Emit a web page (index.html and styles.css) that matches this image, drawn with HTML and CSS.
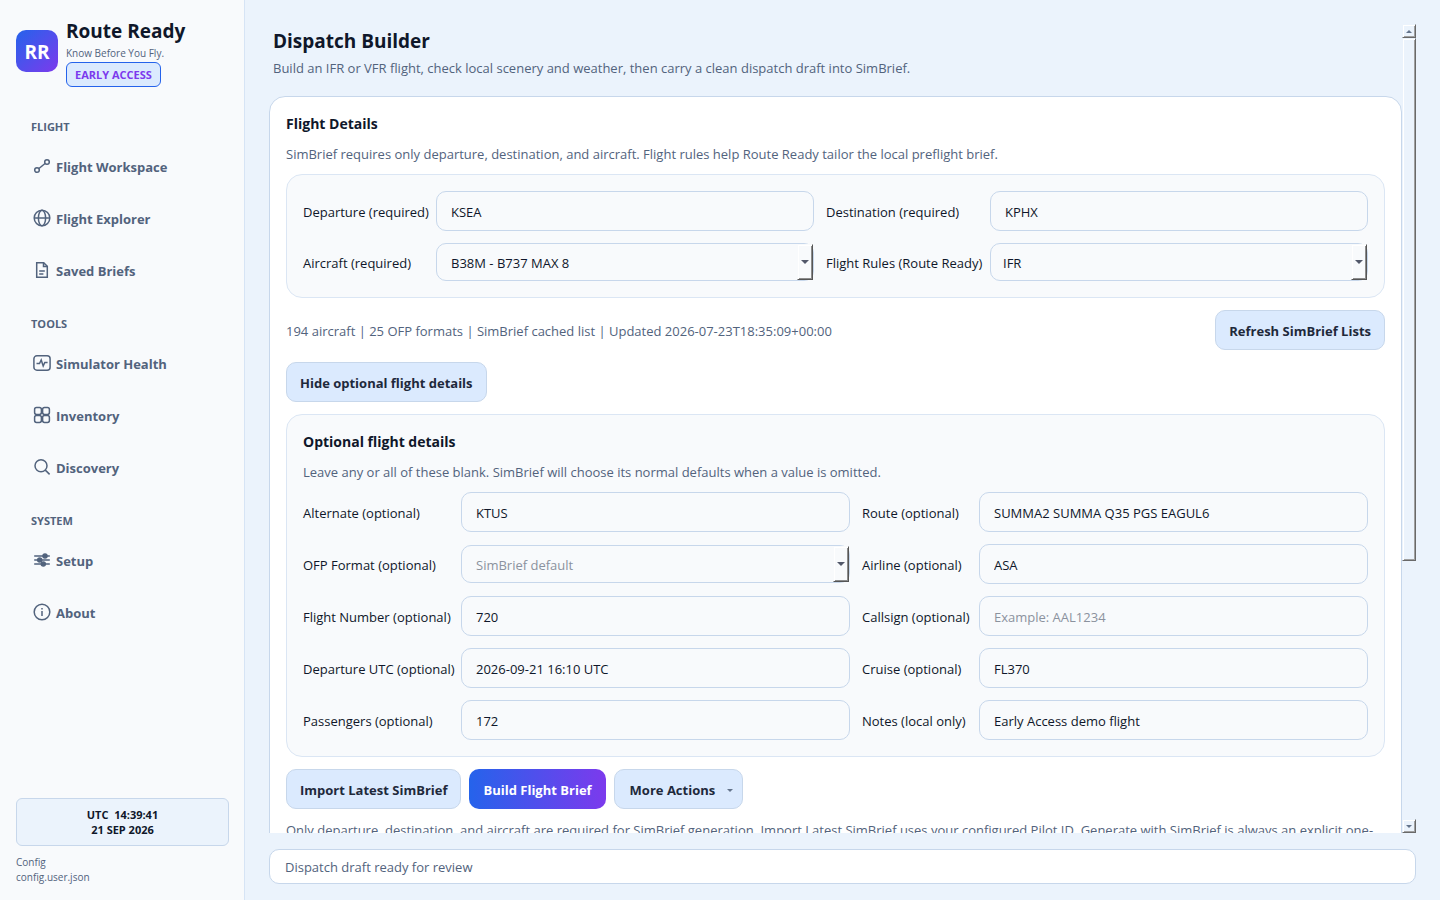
FILE: index.html
```html
<!DOCTYPE html>
<html lang="en">
<head>
  <meta charset="UTF-8" />
  <meta name="viewport" content="width=device-width, initial-scale=1.0"/>
  <title>Route Ready - Dispatch Builder</title>
  <link rel="stylesheet" href="styles.css">
</head>
<body>
  <aside class="sidebar">
    <div class="brand">
      <div class="brand-logo">RR</div>
      <div class="brand-text">
        <div class="brand-name">Route Ready</div>
        <div class="brand-tag">Know Before You Fly.</div>
        <span class="badge">EARLY ACCESS</span>
      </div>
    </div>

    <nav class="nav">
      <h2 class="nav-title">FLIGHT</h2>
      <a class="nav-item" href="#workspace">
        <svg viewBox="0 0 18 18"><circle cx="4" cy="13" r="2.3"/><circle cx="14" cy="5" r="2.3"/><path d="M5.9 11.5l6.2-5"/></svg>
        Flight Workspace
      </a>
      <a class="nav-item" href="#explorer">
        <svg viewBox="0 0 18 18"><circle cx="9" cy="9" r="7.8"/><ellipse cx="9" cy="9" rx="3.6" ry="7.8"/><path d="M1.2 9h15.6"/></svg>
        Flight Explorer
      </a>
      <a class="nav-item" href="#briefs">
        <svg viewBox="0 0 18 18"><path d="M3.7 1.7h7l3.6 3.6v11H3.7z"/><path d="M10.5 1.7v3.8h3.8M6.2 10h5.6M6.2 13h4.2"/></svg>
        Saved Briefs
      </a>

      <h2 class="nav-title">TOOLS</h2>
      <a class="nav-item" href="#health">
        <svg viewBox="0 0 18 18"><rect x="0.9" y="1.8" width="16.2" height="14.4" rx="3"/><path d="M3.5 9.5h3L8.2 6l2 6 1.6-3.5h2.8"/></svg>
        Simulator Health
      </a>
      <a class="nav-item" href="#inventory">
        <svg viewBox="0 0 18 18"><rect x="1.6" y="1.6" width="6.8" height="6.8" rx="1.9"/><rect x="9.6" y="1.6" width="6.8" height="6.8" rx="1.9"/><rect x="1.6" y="9.6" width="6.8" height="6.8" rx="1.9"/><rect x="9.6" y="9.6" width="6.8" height="6.8" rx="1.9"/></svg>
        Inventory
      </a>
      <a class="nav-item" href="#discovery">
        <svg viewBox="0 0 18 18"><circle cx="8" cy="7.8" r="6"/><path d="M12.3 12.1l4.3 4.3"/></svg>
        Discovery
      </a>

      <h2 class="nav-title">SYSTEM</h2>
      <a class="nav-item" href="#setup">
        <svg viewBox="0 0 18 18"><path d="M1.2 5h15.6M1.2 9h15.6M1.2 13h15.6"/><circle class="knob" cx="12" cy="5" r="2"/><circle class="knob" cx="6.7" cy="9" r="2"/><circle class="knob" cx="10.3" cy="13" r="2"/></svg>
        Setup
      </a>
      <a class="nav-item" href="#about">
        <svg viewBox="0 0 18 18"><circle cx="9" cy="9" r="7.8"/><path d="M9 8v5M9 5v1.4"/></svg>
        About
      </a>
    </nav>

    <div class="clock">UTC&nbsp; 14:39:41<br>21 SEP 2026</div>
    <div class="config">Config<br>config.user.json</div>
  </aside>

  <main class="main">
    <div class="scroll-area">
      <div class="content">
        <header class="page-header">
          <h1>Dispatch Builder</h1>
          <p class="subtitle">Build an IFR or VFR flight, check local scenery and weather, then carry a clean dispatch draft into SimBrief.</p>
        </header>

        <form class="card">
          <h2 class="card-title">Flight Details</h2>
          <p class="muted">SimBrief requires only departure, destination, and aircraft. Flight rules help Route Ready tailor the local preflight brief.</p>

          <div class="panel fields">
            <label for="departure">Departure (required)</label>
            <input type="text" id="departure" value="KSEA">
            <label for="destination">Destination (required)</label>
            <input type="text" id="destination" value="KPHX">
            <label for="aircraft">Aircraft (required)</label>
            <div class="combo">
              <select id="aircraft"><option>B38M - B737 MAX 8</option></select>
              <span class="combo-arrow"></span>
            </div>
            <label for="rules">Flight Rules (Route Ready)</label>
            <div class="combo">
              <select id="rules" class="plain"><option>IFR</option><option>VFR</option></select>
              <span class="combo-arrow"></span>
            </div>
          </div>

          <div class="list-row">
            <span class="muted">194 aircraft | 25 OFP formats | SimBrief cached list | Updated 2026-07-23T18:35:09+00:00</span>
            <button type="button" class="btn">Refresh SimBrief Lists</button>
          </div>

          <button type="button" class="btn toggle">Hide optional flight details</button>

          <section class="panel">
            <h2 class="card-title">Optional flight details</h2>
            <p class="muted">Leave any or all of these blank. SimBrief will choose its normal defaults when a value is omitted.</p>
            <div class="fields optional">
              <label for="alternate">Alternate (optional)</label>
              <input type="text" id="alternate" value="KTUS">
              <label for="route">Route (optional)</label>
              <input type="text" id="route" value="SUMMA2 SUMMA Q35 PGS EAGUL6">
              <label for="ofp">OFP Format (optional)</label>
              <div class="combo">
                <select id="ofp" class="empty"><option>SimBrief default</option></select>
                <span class="combo-arrow"></span>
              </div>
              <label for="airline">Airline (optional)</label>
              <input type="text" id="airline" value="ASA">
              <label for="number">Flight Number (optional)</label>
              <input type="text" id="number" value="720">
              <label for="callsign">Callsign (optional)</label>
              <input type="text" id="callsign" placeholder="Example: AAL1234">
              <label for="utc">Departure UTC (optional)</label>
              <input type="text" id="utc" value="2026-09-21 16:10 UTC">
              <label for="cruise">Cruise (optional)</label>
              <input type="text" id="cruise" value="FL370">
              <label for="pax">Passengers (optional)</label>
              <input type="text" id="pax" value="172">
              <label for="notes">Notes (local only)</label>
              <input type="text" id="notes" value="Early Access demo flight">
            </div>
          </section>

          <div class="actions">
            <button type="button" class="btn">Import Latest SimBrief</button>
            <button type="button" class="btn primary">Build Flight Brief</button>
            <button type="button" class="btn more">More Actions <span class="caret"></span></button>
          </div>

          <p class="note">Only departure, destination, and aircraft are required for SimBrief generation. Import Latest SimBrief uses your configured Pilot ID. Generate with SimBrief is always an explicit one-flight</p>
        </form>
      </div>

      <div class="scrollbar">
        <button type="button" class="scroll-btn" aria-label="Scroll up"><span class="caret up"></span></button>
        <div class="scroll-track"><div class="scroll-thumb"></div></div>
        <button type="button" class="scroll-btn" aria-label="Scroll down"><span class="caret"></span></button>
      </div>
    </div>

    <div class="status">Dispatch draft ready for review</div>
  </main>
</body>
</html>
```
FILE: styles.css
```css
* {
  box-sizing: border-box;
}
body {
  display: flex;
  height: 100vh;
  margin: 0;
  font-family: "Open Sans", "Noto Sans", sans-serif;
  font-size: 13px;
  line-height: 18px;
  color: #0f172a;
  background-color: #ebf3fc;
}
h1, h2, p {
  margin: 0;
}
input, select, button {
  font: inherit;
  color: inherit;
}

/* sidebar */
.sidebar {
  display: flex;
  flex-direction: column;
  width: 245px;
  flex-shrink: 0;
  padding: 16px 15px 15px 16px;
  background-color: #f8fafc;
  border-right: 1px solid #d6e4f5;
}
.brand {
  display: flex;
  align-items: flex-start;
  gap: 8px;
}
.brand-logo {
  width: 42px;
  height: 42px;
  margin-top: 14px;
  border-radius: 10px;
  background: linear-gradient(135deg, #2563eb, #7c3aed);
  color: #fff;
  font-size: 19px;
  font-weight: bold;
  line-height: 44px;
  text-align: center;
}
.brand-name {
  font-size: 19px;
  font-weight: bold;
  line-height: 30px;
}
.brand-tag {
  color: #52637d;
  font-size: 10px;
  line-height: 15px;
}
.badge {
  display: inline-block;
  margin-top: 1px;
  padding: 4px 8px;
  border: 1px solid #2563eb;
  border-radius: 6px;
  background-color: #dbeafe;
  color: #7c3aed;
  font-size: 11px;
  font-weight: bold;
  line-height: 15px;
}
.nav {
  display: flex;
  flex-direction: column;
  gap: 8px;
  margin-top: 17px;
}
.nav-title {
  padding: 15px 15px 3px;
  color: #52637d;
  font-size: 11px;
  line-height: 15px;
}
.nav-item {
  display: flex;
  align-items: center;
  gap: 5px;
  height: 44px;
  padding: 0 17px;
  color: #52637d;
  font-weight: bold;
  text-decoration: none;
}
.nav-item svg {
  width: 18px;
  height: 18px;
  margin-bottom: 2px;
  fill: none;
  stroke: #52637d;
  stroke-width: 1.5;
}
.nav-item .knob {
  fill: #52637d;
}
.clock {
  margin-top: auto;
  padding: 8px;
  border: 1px solid #c7d7eb;
  border-radius: 6px;
  background-color: #ebf3fc;
  font-size: 11px;
  font-weight: bold;
  line-height: 15px;
  text-align: center;
}
.config {
  margin-top: 9px;
  color: #52637d;
  font-size: 10px;
  line-height: 15px;
}

/* main column */
.main {
  display: flex;
  flex-direction: column;
  flex: 1;
  gap: 16px;
  min-width: 0;
  padding: 24px 24px 16px;
}
.scroll-area {
  display: flex;
  flex: 1;
  min-height: 0;
}
.content {
  flex: 1;
  min-width: 0;
  overflow: hidden;
}
.page-header {
  padding: 2px 4px 19px;
}
h1 {
  margin-bottom: 3px;
  font-size: 19px;
  line-height: 30px;
}
.subtitle, .muted, .note {
  color: #52637d;
}
.card {
  display: flex;
  flex-direction: column;
  gap: 12px;
  padding: 16px;
  border: 1px solid #c7d7eb;
  border-radius: 16px;
  background-color: #fff;
}
.card-title {
  padding-top: 2px;
  font-size: 14px;
  line-height: 17px;
}
.muted {
  padding-top: 2px;
  line-height: 16px;
}
.panel {
  padding: 16px;
  border: 1px solid #dbe6f4;
  border-radius: 16px;
  background-color: #f8fafc;
}
.panel .muted {
  margin: 12px 0;
}
.fields {
  display: grid;
  grid-template-columns: 121px 1fr 152px 1fr;
  align-items: center;
  gap: 12px;
}
.fields.optional {
  grid-template-columns: 146px 1fr 105px 1fr;
}
label {
  padding-top: 2px;
  white-space: nowrap;
}
input, select {
  width: 100%;
  height: 40px;
  padding: 2px 14px 0;
  border: 1px solid #c7d7eb;
  border-radius: 10px;
  background-color: #f8fafc;
}
input::placeholder {
  color: #8b929e;
}
.combo {
  position: relative;
  display: flex;
}
select {
  height: 38px;
  appearance: none;
}
select.plain {
  padding-left: 12px;
}
select.empty {
  color: #8b929e;
}
.combo-arrow {
  position: absolute;
  top: 1px;
  right: 1px;
  bottom: 1px;
  width: 16px;
  border: 1px solid;
  border-color: #f8fafc #555 #555 #f8fafc;
  background-color: #f8fafc;
  box-shadow: inset 1px 1px #fff, inset -1px -1px #8c8c8c;
  pointer-events: none;
}
.combo-arrow::after {
  content: "";
  position: absolute;
  top: 15px;
  left: 3px;
  border: 4px solid transparent;
  border-top-color: #52586a;
  border-bottom: 0;
}
.list-row {
  display: flex;
  align-items: center;
  justify-content: space-between;
}
.btn {
  height: 40px;
  padding: 2px 13px 0;
  border: 1px solid #c7d7eb;
  border-radius: 10px;
  background-color: #dbeafe;
  color: #1e293b;
  font-weight: bold;
}
.toggle {
  align-self: flex-start;
}
.actions {
  display: flex;
  gap: 8px;
}
.primary {
  padding: 2px 14px 0;
  border: 0;
  background: linear-gradient(90deg, #2563eb, #7c3aed);
  color: #fff;
}
.more {
  display: flex;
  align-items: center;
  gap: 12px;
  padding-right: 9px;
  padding-left: 15px;
}
.caret {
  border: 3px solid transparent;
  border-top-color: #64748b;
  border-bottom: 0;
}
.caret.up {
  border-top: 0;
  border-bottom: 3px solid #64748b;
}

/* scrollbar */
.scrollbar {
  display: flex;
  flex-direction: column;
  width: 14px;
}
.scroll-btn, .scroll-thumb {
  border: 1px solid;
  border-color: #ebf3fc #696969 #696969 #ebf3fc;
  background-color: #ebf3fc;
  box-shadow: inset 1px 1px #fff, inset -1px -1px #a0a0a0;
}
.scroll-btn {
  display: flex;
  align-items: center;
  justify-content: center;
  height: 14px;
  padding: 0;
}
.scroll-track {
  flex: 1;
}
.scroll-thumb {
  height: 67%;
}

.status {
  padding: 8px 15px 7px;
  border: 1px solid #c7d7eb;
  border-radius: 10px;
  background-color: #fff;
  color: #52637d;
}
```
